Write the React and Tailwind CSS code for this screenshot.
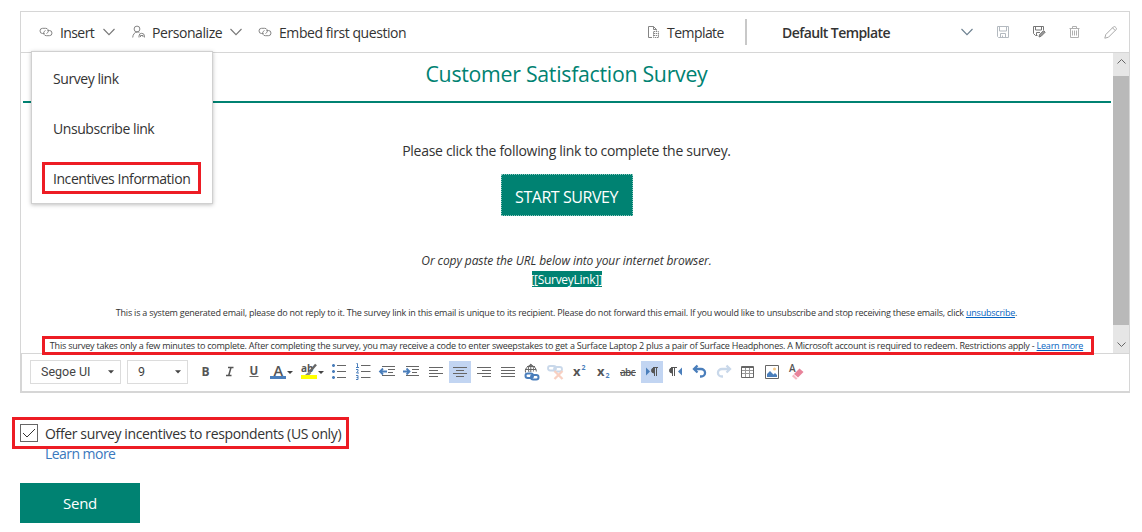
const LinkIcon = () => (
  <svg width="14" height="12" viewBox="0 0 14 12" fill="none" stroke="#858585" strokeWidth="1">
    <path d="M5.500 7.500H3.600a2.600 2.600 0 0 1 0-5.200h3a2.600 2.600 0 0 1 2.200 4.200l-1.300 1" />
    <path d="M8.500 4.500h1.900a2.600 2.600 0 0 1 0 5.200h-3a2.600 2.600 0 0 1-2.200-4.200l1.300-1" />
  </svg>
);

const PersonIcon = () => (
  <svg width="14" height="14" viewBox="0 0 14 14" fill="none" stroke="#858585" strokeWidth="1">
    <circle cx="5" cy="4" r="2.900" />
    <path d="M.7 12.500C.9 9.300 2.800 7 5.400 7c.8 0 1.400.2 2 .6M7 12.500V11a2.700 2.700 0 0 1 5.400 0v1.500M8.500 12V10.500h2.500V12" />
  </svg>
);

const TemplateIcon = () => (
  <svg width="13" height="14" viewBox="0 0 13 14" fill="none" stroke="#858585" strokeWidth="1">
    <path d="M5 12.500H1.500V1.500h5l3 3v1M6.500 1.500v3h3" />
    <path d="M6.500 6.500h5v6h-5zM6.500 8.500h5M6.500 10.500h5" strokeDasharray="1.500 .7" />
  </svg>
);

const Chevron = ({ stroke = "#777" }) => (
  <svg width="12" height="8" viewBox="0 0 12 8" fill="none" stroke={stroke} strokeWidth="1.100">
    <path d="M.5 1 6 6.700 11.500 1" />
  </svg>
);

const SaveIcon = () => (
  <svg width="12" height="12" viewBox="0 0 12 12" fill="none" stroke="#b4bac0" strokeWidth="1">
    <path d="M.5.5h11v11h-10l-1-1zM2.500.5v4.500h7V.5M3.500 11.500v-4h5v4M5.500 9.500v2" />
  </svg>
);

const SaveEditIcon = () => (
  <svg width="13" height="12" viewBox="0 0 13 12" fill="none" stroke="#777" strokeWidth="1">
    <path d="M4.500 9.500h-2l-2-2v-7h10v3.500M2.500.5V4h6V.5M3.500 9.500v-3H7" />
    <path d="m6 11 .6-2.400 4-4 1.600 1.600-4 4z" fill="#999" />
  </svg>
);

const TrashIcon = () => (
  <svg width="11" height="13" viewBox="0 0 11 13" fill="none" stroke="#b0b0b0" strokeWidth="1">
    <path d="M.5 2.500h10M3.500 2.500v-2h4v2M1.500 2.500v9h8v-9M3.500 4.500v5M5.500 4.500v5M7.500 4.500v5" />
  </svg>
);

const PencilIcon = () => (
  <svg width="13" height="13" viewBox="0 0 13 13" fill="none" stroke="#aaa" strokeWidth="1">
    <path d="m.8 12.200 1-3.700 7.500-7.500a1.400 1.400 0 0 1 2 0l.7.7a1.400 1.400 0 0 1 0 2l-7.500 7.500zM8.500 1.800l2.700 2.700" />
  </svg>
);

const Caret = () => (
  <svg width="6" height="4" viewBox="0 0 6 4" fill="#444"><path d="M0 .3h6L3 3.500z" /></svg>
);

const Select = ({ className, children }) => (
  <div className={`flex h-6 items-center justify-between border border-[#dcdcdc] pr-[6px] pl-[10px] font-['Roboto',sans-serif] text-[12.5px] text-[#444] ${className}`}>
    <span>{children}</span>
    <Caret />
  </div>
);

const Tool = ({ active, wide, children }) => (
  <div className={`flex h-[22px] items-center justify-center ${wide ? "w-[31px]" : "mx-px w-[22px]"} ${active ? "bg-[#c2d5f2]" : ""}`}>
    <svg width={wide ? 31 : 22} height="22" viewBox={wide ? "0 0 31 22" : "0 0 22 22"} fill="none" stroke="#666" strokeWidth="1">
      {children}
    </svg>
  </div>
);

const T = ({ fill = "#555", className = "", ...p }) => (
  <text fill={fill} stroke="none" className={`font-['Open_Sans',sans-serif] ${className}`} {...p} />
);

const ChainGlyph = () => (
  <>
    <rect x="4.500" y="12.500" width="7.500" height="4.500" rx="2.250" />
    <rect x="10" y="14" width="7.500" height="4.500" rx="2.250" />
  </>
);

const FormatBar = () => (
  <div className="flex h-[37px] items-start border-l border-[#d6d6d6] pt-[6px] pl-2">
    <Select className="w-[91px]">Segoe UI</Select>
    <Select className="ml-[6px] w-[61px]">9</Select>
    <div className="ml-[6px] flex pt-px">
      <Tool><T x="6.500" y="15" fontSize="12" fontWeight="700">B</T></Tool>
      <Tool><path d="M9 6.500h5.500M7 14.500h5.500M12 6.500l-2.300 8" strokeWidth="1.500" stroke="#555" /></Tool>
      <Tool><T x="6.500" y="14" fontSize="11.500" fontWeight="700">U</T><path d="M6.500 15.500h9" /></Tool>
      <Tool wide>
        <T x="7.500" y="15" fontSize="14.500" fontWeight="600">A</T>
        <path d="M4 16.500h16" stroke="#4a7ebb" strokeWidth="3" />
        <path d="M21 10h6l-3 3z" fill="#444" stroke="none" />
      </Tool>
      <Tool wide>
        <T x="4" y="10.500" fontSize="10" fontWeight="700">ab</T>
        <path d="M19 3.500 12.500 11" strokeWidth="2.400" />
        <path d="M12.500 10 8 14h4.500l2-2z" fill="#888" stroke="none" />
        <path d="M4 16h16" stroke="#ffff00" strokeWidth="4" />
        <path d="M21 10h6l-3 3z" fill="#444" stroke="none" />
      </Tool>
      <Tool>
        <path d="M8 4.500h9M8 10.500h9M8 16.500h9" />
        <path d="M3 4.500h3M4.500 3v3M3 10.500h3M4.500 9v3M3 16.500h3M4.500 15v3" stroke="#4a7ebb" strokeWidth="1.700" />
      </Tool>
      <Tool>
        <path d="M8 4.500h9.500M8 10.500h9.500M8 16.500h9.500" />
        <path d="M3.500 2.500h1v4M3 6.500h3M3 8.500h2v1.500L3.500 12H6M3 14.500h2v4H3M3.500 16.500H5" stroke="#4a7ebb" />
      </Tool>
      <Tool>
        <path d="M5 5.500h13M11 8.500h7M11 11.500h5M5 14.500h13" />
        <path d="M3 10.500h7M6 7.500l-3 3 3 3" stroke="#4a7ebb" strokeWidth="1.800" />
      </Tool>
      <Tool>
        <path d="M5 5.500h13M11 8.500h7M11 11.500h5M5 14.500h13" />
        <path d="M2 10.500h7M5.500 7.500l3 3-3 3" stroke="#4a7ebb" strokeWidth="1.800" />
      </Tool>
      <Tool><path d="M4 6.500h14M4 9.500h9M4 12.500h14M4 15.500h9" /></Tool>
      <Tool active><path d="M4 6.500h14M7 9.500h8M4 12.500h14M7 15.500h8" /></Tool>
      <Tool><path d="M4 6.500h14M9 9.500h9M4 12.500h14M9 15.500h9" /></Tool>
      <Tool><path d="M4 6.500h14M4 9.500h14M4 12.500h14M4 15.500h14" /></Tool>
      <Tool>
        <path d="M4.500 11.500a5.500 5.500 0 1 1 10.800-1M4 8.500h11M6 5.500h8M9.800 3v8M9.800 3C7 6 7 8 8 11M9.800 3c3 2.500 3 5 2.500 7.500" />
        <g stroke="#4a7ebb" strokeWidth="2"><ChainGlyph /></g>
      </Tool>
      <Tool>
        <g stroke="#c9d8ea" strokeWidth="1.800">
          <rect x="3" y="5" width="8" height="4.500" rx="2.250" />
          <rect x="9" y="6" width="8" height="4.500" rx="2.250" />
        </g>
        <path d="m9.500 10 8 8M17.500 10l-8 8" stroke="#f8d0c2" strokeWidth="2.300" />
      </Tool>
      <Tool><T x="4" y="15" fontSize="13" fontWeight="700">x</T><T x="12.500" y="8.500" fontSize="7" fontWeight="700" fill="#4a7ebb">2</T></Tool>
      <Tool><T x="4" y="15" fontSize="13" fontWeight="700">x</T><T x="12.500" y="17" fontSize="7" fontWeight="700" fill="#4a7ebb">2</T></Tool>
      <Tool><T x="3" y="14.500" fontSize="10" fontWeight="600" textLength="15.500">abc</T><path d="M3 11.500h16" stroke="#555" /></Tool>
      <Tool active>
        <path d="M5 6.500v8l4-4z" fill="#4a7ebb" stroke="none" />
        <path d="M13 7a2.500 2.500 0 0 0 0 5z" fill="#555" stroke="#555" />
        <path d="M12 6.500h5M13.500 6.500v8.500M15.500 6.500v8.500" stroke="#555" />
      </Tool>
      <Tool>
        <path d="M17 6.500v8l-4-4z" fill="#4a7ebb" stroke="none" />
        <path d="M7 7a2.500 2.500 0 0 0 0 5z" fill="#555" stroke="#555" />
        <path d="M6 6.500h6M7.500 6.500v8.500M9.500 6.500v8.500" stroke="#555" />
      </Tool>
      <Tool><path d="M8.500 4.500 5 8l3.500 3.500M5.500 8H12a4 3.700 0 0 1 0 7.500h-1" stroke="#4a7ebb" strokeWidth="2.300" /></Tool>
      <Tool><path d="M13.500 4.500 17 8l-3.500 3.500M16.500 8H9A4 3.700 0 0 0 9 15.500h1" stroke="#c9d8ea" strokeWidth="2.300" /></Tool>
      <Tool>
        <path d="M4 9.500h12M4 12.500h12M8.500 7v9M12.500 7v9" stroke="#999" />
        <path d="M4.500 5.500h12v11h-12zM4 6.500h13" stroke="#666" />
      </Tool>
      <Tool>
        <path d="M4.500 4.500h13v13h-13z" stroke="#666" />
        <path d="M6 16v-3l3-3 3.500 3.500 1.500-1.500 2 2v2z" fill="#4a7ebb" stroke="none" />
        <circle cx="13.500" cy="8" r="1.500" fill="#f5c98a" stroke="none" />
      </Tool>
      <Tool>
        <T x="4" y="11" fontSize="10" fontWeight="600">A</T>
        <path d="m9 13 5.500-5.500L18.500 11 13 16.500z" fill="#e8839a" stroke="none" />
        <path d="m8.500 13.500 4 4-1.500 1.200-4-3.500z" fill="#f5b8c3" stroke="none" />
      </Tool>
    </div>
  </div>
);

const TopBar = () => (
  <div className="flex h-[41px] items-center border-b border-[#d6d6d6] pl-[18px] text-[14px] tracking-[-0.43px]">
    <div className="flex w-[93px] items-center">
      <LinkIcon /><span className="ml-[7px] w-[43px] pt-px tracking-[-0.6px] whitespace-nowrap">Insert</span><Chevron />
    </div>
    <div className="flex w-[126px] items-center">
      <PersonIcon /><span className="ml-[6px] w-[78px] pt-px whitespace-nowrap">Personalize</span><Chevron />
    </div>
    <div className="flex w-[389px] items-center">
      <LinkIcon /><span className="ml-[7px] pt-px whitespace-nowrap">Embed first question</span>
    </div>
    <div className="flex w-[98px] items-center">
      <TemplateIcon /><span className="ml-[7px] pt-px tracking-[-0.55px] whitespace-nowrap">Template</span>
    </div>
    <div className="h-[26px] w-0.5 bg-[#c8c8c8]" />
    <div className="ml-[35px] w-[179px] pt-px font-semibold tracking-[-0.58px] whitespace-nowrap">Default Template</div>
    <Chevron stroke="#6b7f8f" />
    <div className="ml-[24px] flex items-center"><SaveIcon /></div>
    <div className="ml-[24px] flex items-center"><SaveEditIcon /></div>
    <div className="ml-[23px] flex items-center"><TrashIcon /></div>
    <div className="ml-[24px] flex items-center"><PencilIcon /></div>
  </div>
);

const EmailBody = () => (
  <div className="flex w-[1091px] flex-col items-center whitespace-nowrap">
    <h1 className="flex h-12 items-center pb-[6px] text-[21.3px] tracking-[-0.28px] text-[#008272]">Customer Satisfaction Survey</h1>
    <div className="h-0.5 w-[1088px] bg-[#008272]" />
    <p className="mt-[38px] mb-px h-5 text-[14px] leading-5 tracking-[-0.3px]">Please click the following link to complete the survey.</p>
    <a className="mt-3 flex h-[42px] w-[132px] items-center justify-center border border-dotted border-[#8cc8c0] bg-[#008272] pt-[3px] text-[16px] tracking-[-0.45px] text-white">START SURVEY</a>
    <p className="mt-[35px] h-5 text-[12px] leading-5 tracking-[-0.1px] italic">Or copy paste the URL below into your internet browser.</p>
    <span className="flex h-4 w-[70px] items-center justify-center bg-[#008272] pt-px text-[12px] tracking-[-0.3px] text-white">[[SurveyLink]]</span>
    <p className="mt-[18px] h-4 text-[9px] leading-4 tracking-[-0.218px]">
      This is a system generated email, please do not reply to it. The survey link in this email is unique to its recipient. Please do not forward this email. If you would like to unsubscribe and stop receiving these emails, click <a className="text-[#0563c1] underline">unsubscribe</a>.
    </p>
    <p className="mt-[17px] h-[15px] text-[9px] leading-4 tracking-[-0.22px]">
      This survey takes only a few minutes to complete. After completing the survey, you may receive a code to enter sweepstakes to get a Surface Laptop 2 plus a pair of Surface Headphones. A Microsoft account is required to redeem. Restrictions apply - <a className="text-[#0563c1] underline">Learn more</a>
    </p>
  </div>
);

const Scrollbar = () => (
  <div className="ml-px flex w-4 flex-col bg-[#e6e6e6]">
    <div className="flex h-[23px] justify-center pt-[6px]">
      <svg width="9" height="5" viewBox="0 0 9 5" fill="none" stroke="#666"><path d="M.5 4.500l4-4 4 4" /></svg>
    </div>
    <div className="h-[249px] bg-[#b9b9b9]" />
    <div className="flex flex-1 justify-center pt-[17px]">
      <svg width="9" height="5" viewBox="0 0 9 5" fill="none" stroke="#666"><path d="M.5.5l4 4 4-4" /></svg>
    </div>
  </div>
);

const InsertMenu = () => (
  <div className="absolute top-[51px] left-[31px] flex h-[153px] w-[182px] flex-col border border-[#d0d0d0] bg-white pt-[2px] pl-[21px] text-[14px] tracking-[-0.44px] shadow-[0_1px_4px_rgba(0,0,0,0.25)]">
    <div className="flex h-[50px] items-center">Survey link</div>
    <div className="flex h-[50px] items-center pt-px">Unsubscribe link</div>
    <div className="flex h-[50px] items-center pt-px">Incentives Information</div>
  </div>
);

export default function App() {
  return (
    <div className="relative h-[532px] w-[1142px] overflow-hidden bg-white pt-[11px] pl-5 font-['Open_Sans',sans-serif] text-[#333]">
      <div className="h-[382px] w-[1110px] border border-b-2 border-[#d6d6d6]">
        <TopBar />
        <div className="flex h-[301px] border-b border-[#d6d6d6]">
          <EmailBody />
          <Scrollbar />
        </div>
        <FormatBar />
      </div>
      <div className="mt-[31px] flex h-[18px] items-center text-[14px] tracking-[-0.36px]">
        <span className="flex h-[18px] w-[18px] items-center justify-center border border-[#666]">
          <svg width="14" height="10" viewBox="0 0 14 10" fill="none" stroke="#333"><path d="M1 5l4 4 8-8" /></svg>
        </span>
        <span className="ml-[7px] pt-px">Offer survey incentives to respondents (US only)</span>
      </div>
      <a className="mt-[2px] ml-[25px] block h-5 text-[14px] leading-5 tracking-[-0.55px] text-[#3a78bd]">Learn more</a>
      <button className="mt-[19px] flex h-10 w-[120px] items-center justify-center bg-[#008272] text-[15px] tracking-[-0.3px] text-white">Send</button>
      <InsertMenu />
      <div className="absolute top-[162px] left-[42px] h-8 w-[159px] border-3 border-[#ed1c24]" />
      <div className="absolute top-[336px] left-[42px] h-[19px] w-[1052px] border-3 border-[#ed1c24]" />
      <div className="absolute top-[417px] left-3 h-8 w-[337px] border-3 border-[#ed1c24]" />
    </div>
  );
}
